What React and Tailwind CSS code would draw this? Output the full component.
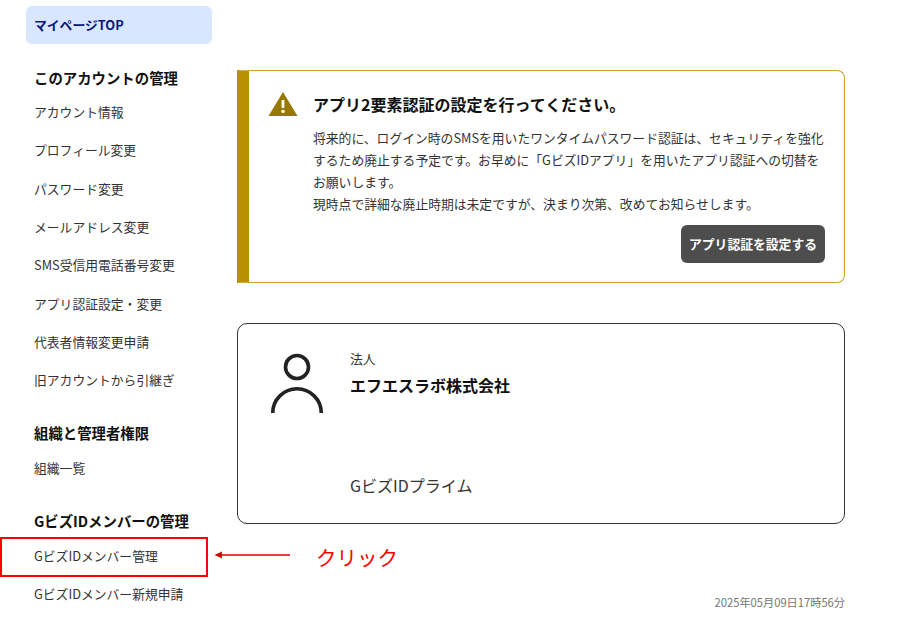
const font = { fontFamily: '"Noto Sans CJK JP", "Noto Sans", sans-serif' };

function Item({ children }) {
  return <a className="flex h-[38.3px] items-center pl-[8px] text-[12.8px] text-[#333333]">{children}</a>;
}

function Heading({ children, className }) {
  return <h3 className={`flex h-[24px] items-center pl-[8px] text-[14.4px] font-bold text-[#111111] ${className}`}>{children}</h3>;
}

export default function App() {
  return (
    <div style={font} className="relative h-[620px] w-[898px] overflow-hidden bg-white">
      <div className="flex pl-[26px] pt-[6px]">
        <aside className="w-[186px] shrink-0">
          <a className="flex h-[38px] items-center rounded-[6px] bg-[#d9e6ff] pl-[8px] text-[12.8px] font-bold text-[#0a1a7a]">マイページTOP</a>
          <Heading className="mt-[22px]">このアカウントの管理</Heading>
          <div className="mt-[2.6px]">
            <Item>アカウント情報</Item>
            <Item>プロフィール変更</Item>
            <Item>パスワード変更</Item>
            <Item>メールアドレス変更</Item>
            <Item>SMS受信用電話番号変更</Item>
            <Item>アプリ認証設定・変更</Item>
            <Item>代表者情報変更申請</Item>
            <Item>旧アカウントから引継ぎ</Item>
          </div>
          <Heading className="mt-[21.8px]">組織と管理者権限</Heading>
          <div className="mt-[3.5px]">
            <Item>組織一覧</Item>
          </div>
          <Heading className="mt-[22.5px]">GビズIDメンバーの管理</Heading>
          <div className="mt-[3.5px]">
            <Item>GビズIDメンバー管理</Item>
            <Item>GビズIDメンバー新規申請</Item>
          </div>
        </aside>
        <main className="ml-[25px] w-[608px] shrink-0 pt-[64px]">
          <section className="h-[213px] rounded-r-[8px] border border-l-[12px] border-[#c9a227] border-l-[#b89000] pl-[19px] pr-[19px] pt-[20px]">
            <div className="flex items-center">
              <svg width="30" height="26" viewBox="0 0 30 26" className="shrink-0">
                <path d="M15 1 L29.5 25 H0.5 Z" fill="#977800" />
                <rect x="13.6" y="9" width="2.8" height="8" rx="0.8" fill="#fff" />
                <circle cx="15" cy="20.4" r="1.7" fill="#fff" />
              </svg>
              <h2 className="ml-[15px] text-[16px] font-bold leading-[26px] text-[#111111]">アプリ2要素認証の設定を行ってください。</h2>
            </div>
            <p className="ml-[45px] mt-[10px] text-[12.8px] leading-[22.1px] text-[#333333]">
              将来的に、ログイン時のSMSを用いたワンタイムパスワード認証は、セキュリティを強化するため廃止する予定です。お早めに「GビズIDアプリ」を用いたアプリ認証への切替をお願いします。<br />
              現時点で詳細な廃止時期は未定ですが、決まり次第、改めてお知らせします。
            </p>
            <div className="mt-[10px] flex justify-end">
              <button className="h-[38px] w-[144px] rounded-[6px] bg-[#4d4d4d] pb-[1px] text-[12.8px] font-bold text-white">アプリ認証を設定する</button>
            </div>
          </section>
          <section className="mt-[40px] flex h-[201px] rounded-[10px] border border-[#333333] pl-[29px] pt-[26px]">
            <svg width="58" height="63" viewBox="0 0 58 63" className="shrink-0" fill="none" stroke="#222222" strokeWidth="3.6">
              <circle cx="30" cy="17" r="11.5" />
              <path d="M5.75 63 A24.25 24.25 0 0 1 54.25 63" />
            </svg>
            <div className="ml-[25px] -mt-[1px]">
              <p className="text-[12.8px] leading-[20px] text-[#333333]">法人</p>
              <p className="mt-[4px] text-[16px] font-bold leading-[24px] text-[#111111]">エフエスラボ株式会社</p>
              <p className="mt-[76px] text-[16px] leading-[24px] text-[#333333]">GビズIDプライム</p>
            </div>
          </section>
          <p className="mt-[70px] text-right text-[11.2px] leading-[16px] text-[#767676]">2025年05月09日17時56分</p>
        </main>
      </div>
      <div className="absolute left-[0px] top-[537px] h-[40px] w-[208px] border-2 border-[#ff0000]" />
      <svg className="absolute left-[214px] top-[549px]" width="78" height="14" viewBox="0 0 78 14">
        <path d="M76 6 H8" stroke="#e00000" strokeWidth="1.5" />
        <path d="M0.5 6 L8 2.5 V9.5 Z" fill="#e00000" />
      </svg>
      <span className="absolute left-[316px] top-[541px] text-[20.5px] font-normal leading-[32px] text-[#ff0000]">クリック</span>
    </div>
  );
}
